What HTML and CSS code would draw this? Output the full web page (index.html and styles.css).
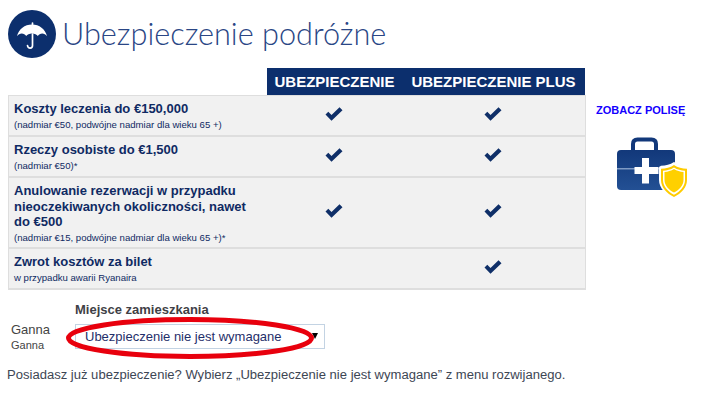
FILE: index.html
```html
<!DOCTYPE html>
<html lang="pl">
<head>
<meta charset="utf-8">
<title>Ubezpieczenie podróżne</title>
<link rel="stylesheet" href="styles.css">
</head>
<body>
<header class="title-row">
  <svg class="logo" viewBox="0 0 48 48" width="48" height="48" aria-hidden="true">
    <circle cx="24" cy="24" r="24" fill="#0c2f6d"/>
    <path d="M24 14.500c-7.500 0-13 4.500-15 11.500 1.300-1.800 3-2.600 4.700-2.600 1.900 0 3.500.9 4.500 2.600 1-1.700 3.200-2.600 5.800-2.600s4.800.9 5.800 2.600c1-1.700 2.600-2.600 4.500-2.600 1.700 0 3.400.8 4.700 2.600-2-7-7.500-11.500-15-11.500z" fill="#fff"/>
    <path d="M24.500 13v1.500M24.500 24v11.500c0 3.500-4.500 3.500-5 0" fill="none" stroke="#fff" stroke-width="1.700" stroke-linecap="round"/>
  </svg>
  <h1 class="title">Ubezpieczenie podróżne</h1>
</header>

<main class="content">
  <section class="plans">
    <div class="heads">
      <div class="head head-a">UBEZPIECZENIE</div>
      <div class="head head-b">UBEZPIECZENIE PLUS</div>
    </div>
    <div class="table">
      <div class="row row-41">
        <div class="label"><strong>Koszty leczenia do €150,000</strong><small>(nadmiar €50, podwójne nadmiar dla wieku 65 +)</small></div>
        <div class="mark"><svg class="check" viewBox="0 0 18 14"><path d="M0.500 7.500 3.300 4.800 6.500 8 14.500 0.300 17.500 3.200 6.500 13.700z"/></svg></div>
        <div class="mark"><svg class="check" viewBox="0 0 18 14"><path d="M0.500 7.500 3.300 4.800 6.500 8 14.500 0.300 17.500 3.200 6.500 13.700z"/></svg></div>
      </div>
      <div class="row row-41">
        <div class="label"><strong>Rzeczy osobiste do €1,500</strong><small>(nadmiar €50)*</small></div>
        <div class="mark"><svg class="check" viewBox="0 0 18 14"><path d="M0.500 7.500 3.300 4.800 6.500 8 14.500 0.300 17.500 3.200 6.500 13.700z"/></svg></div>
        <div class="mark"><svg class="check" viewBox="0 0 18 14"><path d="M0.500 7.500 3.300 4.800 6.500 8 14.500 0.300 17.500 3.200 6.500 13.700z"/></svg></div>
      </div>
      <div class="row row-71">
        <div class="label"><strong>Anulowanie rezerwacji w przypadku nieoczekiwanych okoliczności, nawet do €500</strong><small>(nadmiar €15, podwójne nadmiar dla wieku 65 +)*</small></div>
        <div class="mark"><svg class="check" viewBox="0 0 18 14"><path d="M0.500 7.500 3.300 4.800 6.500 8 14.500 0.300 17.500 3.200 6.500 13.700z"/></svg></div>
        <div class="mark"><svg class="check" viewBox="0 0 18 14"><path d="M0.500 7.500 3.300 4.800 6.500 8 14.500 0.300 17.500 3.200 6.500 13.700z"/></svg></div>
      </div>
      <div class="row row-41">
        <div class="label"><strong>Zwrot kosztów za bilet</strong><small>w przypadku awarii Ryanaira</small></div>
        <div class="mark"></div>
        <div class="mark"><svg class="check" viewBox="0 0 18 14"><path d="M0.500 7.500 3.300 4.800 6.500 8 14.500 0.300 17.500 3.200 6.500 13.700z"/></svg></div>
      </div>
    </div>
  </section>
  <aside class="side">
    <a class="policy" href="#">ZOBACZ POLISĘ</a>
    <svg class="kit" viewBox="0 0 72 62" width="72" height="62" aria-hidden="true">
      <defs>
        <linearGradient id="kitfill" x1="0" y1="0" x2="0" y2="1"><stop offset="0" stop-color="#12387a"/><stop offset="1" stop-color="#235094"/></linearGradient>
      </defs>
      <path d="M16 14V7c0-3 1.500-4.500 4.500-4.500h14c3 0 4.500 1.500 4.500 4.500v7" fill="none" stroke="#12387a" stroke-width="4"/>
      <rect x="0" y="13" width="58" height="40" rx="4" fill="url(#kitfill)"/>
      <rect x="0" y="31" width="58" height="1.500" fill="#7f9ac4"/>
      <path d="M25 21h7v9h9.500v7H32v9.500h-7V37h-7.500v-7H25z" fill="#fff"/>
      <path d="M57 25c-4 2.800-8 3.600-13 3.800-1 .5-2 1-2 2V43c0 8 7 15 15 18.500 8-3.500 15-10.500 15-18.500V28.800c-5-.2-11-1-15-3.800z" fill="#fff"/>
      <path d="M57 28c-3.800 2.700-8 3.600-13 3.800V43c0 7.500 5.800 13.500 13 17 7.200-3.500 13-9.500 13-17V31.800c-5-.2-9.200-1.100-13-3.800z" fill="#ffcc00"/>
      <path d="M57 30.500c-3.300 2.200-7 3-11 3.300V43c0 6.300 4.800 11.500 11 14.700 6.200-3.200 11-8.400 11-14.700v-9.200c-4-.3-7.700-1.100-11-3.300z" fill="#fff"/>
      <path d="M57 32c-2.900 1.900-6 2.700-9.500 3v8c0 5.400 4.100 9.800 9.500 12.600 5.400-2.800 9.500-7.200 9.500-12.600v-8c-3.500-.3-6.600-1.100-9.500-3z" fill="#ffd000"/>
    </svg>
  </aside>
</main>

<section class="residence">
  <div class="country"><span class="country-main">Ganna</span><span class="country-sub">Ganna</span></div>
  <div class="field">
    <div class="field-label">Miejsce zamieszkania</div>
    <div class="select">
      <span>Ubezpieczenie nie jest wymagane</span>
      <span class="arrow"></span>
      <svg class="ring" viewBox="0 0 250 42" width="250" height="42" aria-hidden="true">
        <ellipse cx="125" cy="21" rx="121.500" ry="18.500" fill="none" stroke="#e8000d" stroke-width="5"/>
      </svg>
    </div>
  </div>
</section>
<p class="note">Posiadasz już ubezpieczenie? Wybierz „Ubezpieczenie nie jest wymagane” z menu rozwijanego.</p>
</body>
</html>
```

FILE: styles.css
```css
* { box-sizing: border-box; }
html, body { margin: 0; padding: 0; background: #fff; }
body {
  width: 718px;
  height: 404px;
  overflow: hidden;
  padding: 10px 0 0 8px;
  font-family: "Liberation Sans", Arial, sans-serif;
  color: #444;
}
.title-row { display: flex; align-items: center; height: 48px; gap: 6px; }
.logo { display: block; flex: none; }
.title {
  margin: 0;
  font-family: "Lato", sans-serif;
  font-weight: 300;
  font-size: 30.700px;
  line-height: 48px;
  color: #2a4685;
}
.content { display: flex; margin-top: 10px; }
.plans { width: 578px; flex: none; }
.heads { display: flex; height: 27px; margin-left: 259px; width: 318px; background: #0c2f6d; }
.head {
  color: #fff;
  font-weight: 700;
  font-size: 15px;
  line-height: 27px;
  text-align: center;
  white-space: nowrap;
}
.head-a { width: 135px; }
.head-b { width: 183px; }
.table { width: 578px; background: #f1f1f1; border: 1px solid #dedede; border-width: 1px 1px 0 1px; }
.row {
  display: grid;
  grid-template-columns: 258px 135px 183px;
  border-bottom: 2px solid #dedede;
}
.row-41 { height: 41px; }
.row-71 { height: 71px; }
.label { padding: 5px 0 0 5px; color: #0f2a63; }
.label strong {
  display: block;
  font-size: 13px;
  line-height: 15.500px;
  font-weight: 700;
  width: 250px;
}
.label small {
  display: block;
  margin-top: 2px;
  font-size: 9.600px;
  line-height: 12px;
  white-space: nowrap;
}
.mark { display: flex; align-items: center; justify-content: center; padding: 0 1px 4px 0; }
.check { display: block; width: 18px; height: 14px; fill: #0f2f68; }
.side { display: flex; flex-direction: column; margin-left: 10px; padding-top: 35px; }
.policy {
  color: #1400ff;
  font-weight: 700;
  font-size: 11px;
  line-height: 14px;
  text-decoration: none;
  white-space: nowrap;
}
.kit { display: block; margin: 20px 0 0 21px; overflow: visible; }
.residence { display: flex; margin-top: 12px; }
.country { display: flex; flex-direction: column; width: 67px; padding: 20px 0 0 3px; }
.country-main { font-size: 13px; line-height: 16px; }
.country-sub { font-size: 11px; line-height: 14px; }
.field { width: 250px; }
.field-label { font-weight: 700; font-size: 13px; line-height: 16px; color: #3f3f46; }
.select {
  position: relative;
  display: flex;
  align-items: center;
  justify-content: space-between;
  height: 25px;
  margin-top: 6px;
  padding: 0 6px 0 9px;
  border: 1px solid #c3d3e3;
  font-size: 13px;
  color: #1f2f6a;
}
.arrow { width: 0; height: 0; border: 3.500px solid transparent; border-top: 6px solid #000; border-bottom: 0; margin-top: -1px; }
.ring { position: absolute; left: -11px; top: -8px; overflow: visible; }
.note { margin: 15px 0 0 -1px; font-size: 13.050px; line-height: 15px; color: #3d4654; white-space: nowrap; }
```
